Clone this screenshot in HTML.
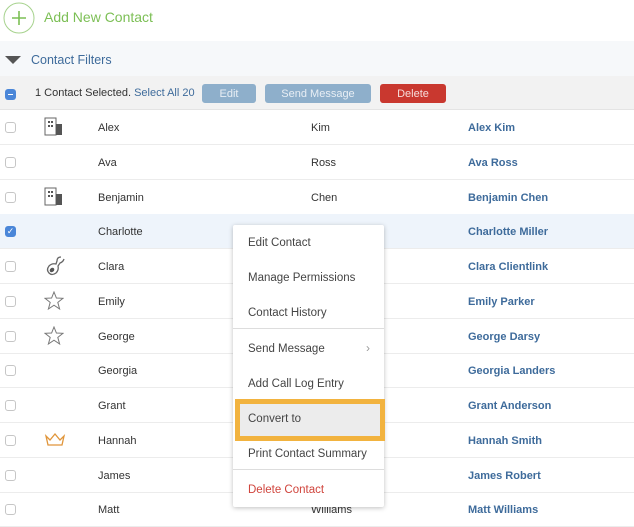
<!DOCTYPE html><html><head><style>
*{margin:0;padding:0;box-sizing:border-box}
body{width:634px;height:522px;overflow:hidden;background:#fff;font-family:"Liberation Sans",sans-serif;position:relative;color:#333}
.a{position:absolute}
.row{position:absolute;left:0;width:634px;height:35px;border-bottom:1px solid #ececec;font-size:11px}
.row span{position:absolute;top:12px}
.cb{position:absolute;left:5px;top:12px;width:11px;height:11px;border:1px solid #c6c6c6;border-radius:3px;background:#fff}
.fn{left:98px}.ln{left:311px}.full{left:468px;color:#3e6b9b;font-weight:bold}
.mi{position:absolute;left:248px;font-size:11.5px;color:#444}
.btn{position:absolute;top:84px;height:19px;border-radius:3px;font-size:11px;display:flex;align-items:center;justify-content:center}
</style></head><body>
<svg class="a" style="left:3px;top:2px" width="32" height="32"><circle cx="16" cy="16" r="15" fill="#fff" stroke="#a6d28d"/><path d="M16 9V23M9 16H23" stroke="#7cbf55" stroke-width="1.6"/></svg>
<div class="a" style="left:44px;top:9px;font-size:14px;color:#7cbf55">Add New Contact</div>
<div class="a" style="left:0;top:41px;width:634px;height:35px;background:#f6f8fa"></div>
<div class="a" style="left:5px;top:56px;width:0;height:0;border-left:8px solid transparent;border-right:8px solid transparent;border-top:8px solid #555"></div>
<div class="a" style="left:31px;top:53px;font-size:12.5px;color:#3e6b9b">Contact Filters</div>
<div class="a" style="left:0;top:76px;width:634px;height:34px;background:#f2f2f2;border-bottom:1px solid #e4e4e4"></div>
<div class="a" style="left:5px;top:89px;width:11px;height:11px;border-radius:3px;background:#4a86d8"><div style="margin:5px 3px 0;height:1px;background:#fff"></div></div>
<div class="a" style="left:35px;top:87px;font-size:11px;color:#333">1 Contact Selected. <span style="color:#3e6b9b">Select All 20</span></div>
<div class="btn" style="left:202px;width:54px;background:#8eafcb;color:#e8eef4">Edit</div>
<div class="btn" style="left:265px;width:106px;background:#8eafcb;color:#e8eef4">Send Message</div>
<div class="btn" style="left:380px;width:66px;background:#c9382f;color:#f6dcda">Delete</div>

<div class="row" style="top:110px"><div class="cb"></div><svg class="a" style="left:44px;top:7px" width="20" height="20"><rect x="1" y="1" width="11" height="17" fill="#fff" stroke="#666"/><rect x="12" y="7" width="6" height="11" fill="#555"/><rect x="4" y="4" width="2" height="2" fill="#555"/><rect x="7" y="4" width="2" height="2" fill="#555"/><rect x="4" y="8" width="2" height="2" fill="#555"/><rect x="7" y="8" width="2" height="2" fill="#555"/></svg><span class="fn">Alex</span><span class="ln">Kim</span><span class="full">Alex Kim</span></div>
<div class="row" style="top:145px"><div class="cb"></div><span class="fn">Ava</span><span class="ln">Ross</span><span class="full">Ava Ross</span></div>
<div class="row" style="top:180px"><div class="cb"></div><svg class="a" style="left:44px;top:7px" width="20" height="20"><rect x="1" y="1" width="11" height="17" fill="#fff" stroke="#666"/><rect x="12" y="7" width="6" height="11" fill="#555"/><rect x="4" y="4" width="2" height="2" fill="#555"/><rect x="7" y="4" width="2" height="2" fill="#555"/><rect x="4" y="8" width="2" height="2" fill="#555"/><rect x="7" y="8" width="2" height="2" fill="#555"/></svg><span class="fn">Benjamin</span><span class="ln">Chen</span><span class="full">Benjamin Chen</span></div>
<div class="row" style="top:214px;background:#eef4fb"><div class="cb" style="background:#4a86d8;border-color:#4a86d8;color:#fff;font-size:9px;line-height:9px;text-align:center">✓</div><span class="fn">Charlotte</span><span class="full">Charlotte Miller</span></div>
<div class="row" style="top:249px"><div class="cb"></div><svg class="a" style="left:44px;top:6px" width="22" height="22"><path d="M17 2 Q13 2 13 6 L12 9 Q8 8 5 11 Q2 15 5 18 Q8 21 12 18 Q15 15 14 11 L16 8 Q19 7 20 4" fill="none" stroke="#666" stroke-width="1.3"/><ellipse cx="8" cy="15" rx="2.5" ry="2" fill="#555" transform="rotate(-40 8 15)"/></svg><span class="fn">Clara</span><span class="full">Clara Clientlink</span></div>
<div class="row" style="top:284px"><div class="cb"></div><svg class="a" style="left:44px;top:7px" width="20" height="20"><path d="M10 1 L12.4 7 L19 7.3 L13.8 11.4 L15.6 18 L10 14.2 L4.4 18 L6.2 11.4 L1 7.3 L7.6 7Z" fill="none" stroke="#777"/></svg><span class="fn">Emily</span><span class="full">Emily Parker</span></div>
<div class="row" style="top:319px"><div class="cb"></div><svg class="a" style="left:44px;top:7px" width="20" height="20"><path d="M10 1 L12.4 7 L19 7.3 L13.8 11.4 L15.6 18 L10 14.2 L4.4 18 L6.2 11.4 L1 7.3 L7.6 7Z" fill="none" stroke="#777"/></svg><span class="fn">George</span><span class="full">George Darsy</span></div>
<div class="row" style="top:353px"><div class="cb"></div><span class="fn">Georgia</span><span class="full">Georgia Landers</span></div>
<div class="row" style="top:388px"><div class="cb"></div><span class="fn">Grant</span><span class="full">Grant Anderson</span></div>
<div class="row" style="top:423px"><div class="cb"></div><svg class="a" style="left:44px;top:9px" width="22" height="16"><path d="M2 4 L6 8 L11 2 L16 8 L20 4 L18 13 L4 13Z" fill="none" stroke="#e0953a" stroke-width="1.3"/></svg><span class="fn">Hannah</span><span class="full">Hannah Smith</span></div>
<div class="row" style="top:458px"><div class="cb"></div><span class="fn">James</span><span class="full">James Robert</span></div>
<div class="row" style="top:492px"><div class="cb"></div><span class="fn">Matt</span><span class="ln">Williams</span><span class="full">Matt Williams</span></div>

<div class="a" style="left:233px;top:225px;width:151px;height:282px;background:#fff;box-shadow:0 1px 5px rgba(0,0,0,.25);border-radius:2px"></div>
<div class="mi" style="top:237px">Edit Contact</div>
<div class="mi" style="top:272px">Manage Permissions</div>
<div class="mi" style="top:307px">Contact History</div>
<div class="a" style="left:233px;top:328px;width:151px;height:1px;background:#ddd"></div>
<div class="mi" style="top:343px">Send Message</div>
<div class="a" style="left:366px;top:341px;font-size:12px;color:#999">›</div>
<div class="mi" style="top:378px">Add Call Log Entry</div>
<div class="a" style="left:235px;top:399px;width:150px;height:42px;border:5px solid #f2b33f;background:#ececec"></div>
<div class="mi" style="top:413px">Convert to</div>
<div class="mi" style="top:448px">Print Contact Summary</div>
<div class="a" style="left:233px;top:469px;width:151px;height:1px;background:#ddd"></div>
<div class="mi" style="top:484px;color:#d0443c">Delete Contact</div>
</body></html>
